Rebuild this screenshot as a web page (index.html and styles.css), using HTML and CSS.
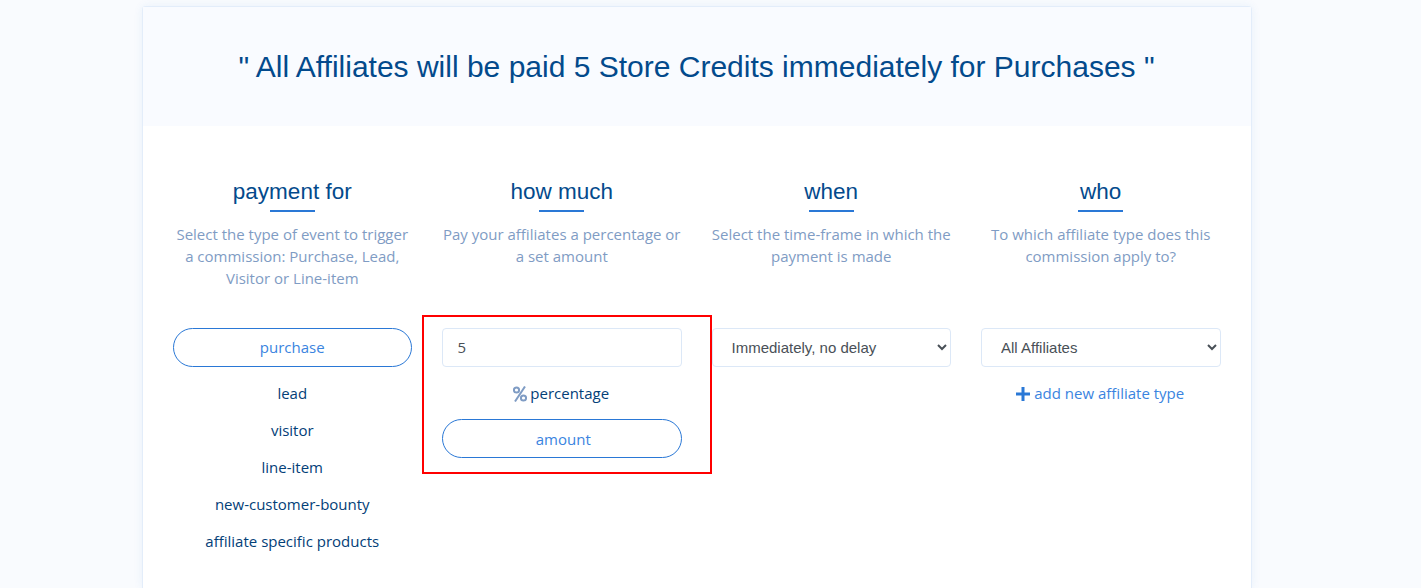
FILE: index.html
```html
<!DOCTYPE html>
<html lang="en">
<head>
    <meta charset="UTF-8">
    <title>Commission rule</title>
    <link rel="stylesheet" href="styles.css">
</head>
<body>
    <div class="card">
        <div class="summary">
            <h1>" All Affiliates will be paid 5 Store Credits immediately for Purchases "</h1>
        </div>
        <div class="columns">
            <div class="column">
                <div class="intro">
                    <h2>payment for</h2>
                    <p>Select the type of event to trigger a commission: Purchase, Lead, Visitor or Line-item</p>
                </div>
                <div class="options">
                    <a class="pill">purchase</a>
                    <a class="option">lead</a>
                    <a class="option">visitor</a>
                    <a class="option">line-item</a>
                    <a class="option">new-customer-bounty</a>
                    <a class="option">affiliate specific products</a>
                </div>
            </div>
            <div class="column">
                <div class="intro">
                    <h2>how much</h2>
                    <p>Pay your affiliates a percentage or a set amount</p>
                </div>
                <div class="highlight">
                    <input class="field" type="text" value="5">
                    <a class="option option-short">
                        <svg class="percent" viewBox="0 0 14 16" width="14" height="16">
                            <circle cx="3.5" cy="4" r="2.6" />
                            <circle cx="10.5" cy="12" r="2.6" />
                            <path d="M12 0.5 2 15.5" />
                        </svg>
                        percentage
                    </a>
                    <a class="pill">amount</a>
                </div>
            </div>
            <div class="column">
                <div class="intro">
                    <h2>when</h2>
                    <p>Select the time-frame in which the payment is made</p>
                </div>
                <select class="field">
                    <option>Immediately, no delay</option>
                </select>
            </div>
            <div class="column">
                <div class="intro">
                    <h2>who</h2>
                    <p>To which affiliate type does this commission apply to?</p>
                </div>
                <select class="field">
                    <option>All Affiliates</option>
                </select>
                <a class="option add-link">
                    <svg class="plus" viewBox="0 0 14 14" width="14" height="14">
                        <path d="M7 0v14M0 7h14" />
                    </svg>
                    add new affiliate type
                </a>
            </div>
        </div>
    </div>
</body>
</html>
```

FILE: styles.css
```css
body {
    margin: 0;
    height: 588px;
    overflow: hidden;
    background-color: #f9fbfe;
    font-family: "Open Sans", sans-serif;
    font-size: 15px;
    color: #034078;
}

.card {
    width: 1110px;
    height: 582px;
    margin: 6px 0 0 142px;
    box-sizing: border-box;
    background-color: #fff;
    border: 1px solid #e3edfa;
    border-bottom: 0;
    border-radius: 4px 4px 0 0;
    box-shadow: 0 0 10px rgba(40, 110, 210, 0.08);
}

.summary {
    height: 119px;
    padding-right: 1px;
    display: flex;
    align-items: center;
    justify-content: center;
    background-color: #f9fbff;
}

.summary h1 {
    margin: 0;
    font-family: "Liberation Sans", Arial, sans-serif;
    font-size: 30px;
    font-weight: 400;
    color: #034a8c;
}

.columns {
    display: grid;
    grid-template-columns: repeat(4, 1fr);
    column-gap: 30px;
    padding: 52px 30.5px 0 29.5px;
}

.intro {
    height: 150px;
    text-align: center;
}

.intro h2 {
    margin: 0;
    font-family: "Liberation Sans", Arial, sans-serif;
    font-size: 22.5px;
    line-height: 28px;
    font-weight: 400;
    color: #034a8c;
}

.intro h2::after {
    content: "";
    display: block;
    width: 45px;
    height: 2px;
    margin: 4px auto 0;
    background-color: #2a78d6;
}

.intro p {
    margin: 11px 0 0;
    line-height: 22px;
    color: #7f9cc4;
}

.options {
    display: flex;
    flex-direction: column;
}

.pill {
    display: block;
    height: 39px;
    line-height: 37px;
    box-sizing: border-box;
    border: 1px solid #2a78d6;
    border-radius: 20px;
    text-align: center;
    color: #3a84e0;
}

.option {
    display: block;
    height: 37px;
    line-height: 37px;
    text-align: center;
}

.options .pill {
    margin-bottom: 8px;
}

.option-short {
    margin: 8px 0 7px;
    padding-right: 2px;
    height: 37px;
}

.highlight {
    margin: -13px -30px 0 -20px;
    padding: 11px 28px 14px 18px;
    border: 2px solid #f00;
}

.highlight .pill {
    padding: 1px 0 0 3px;
}

.field {
    display: block;
    width: 100%;
    height: 39px;
    box-sizing: border-box;
    border: 1px solid #dce8f7;
    border-radius: 4px;
    background-color: #fff;
    color: #495057;
    font-family: "Liberation Sans", Arial, sans-serif;
    font-size: 15px;
}

input.field {
    padding: 0 14.5px 2px;
    font-family: "Open Sans", sans-serif;
}

select.field {
    padding: 0 15px;
}

.percent {
    margin: 0 -1px 0 1px;
    vertical-align: -3px;
    fill: none;
    stroke: #7f9cc4;
    stroke-width: 2;
}

.plus {
    vertical-align: -2px;
    fill: none;
    stroke: #2a78d6;
    stroke-width: 3;
}

.add-link {
    margin-top: 8px;
    padding-right: 1px;
    color: #3a84e0;
}
```
